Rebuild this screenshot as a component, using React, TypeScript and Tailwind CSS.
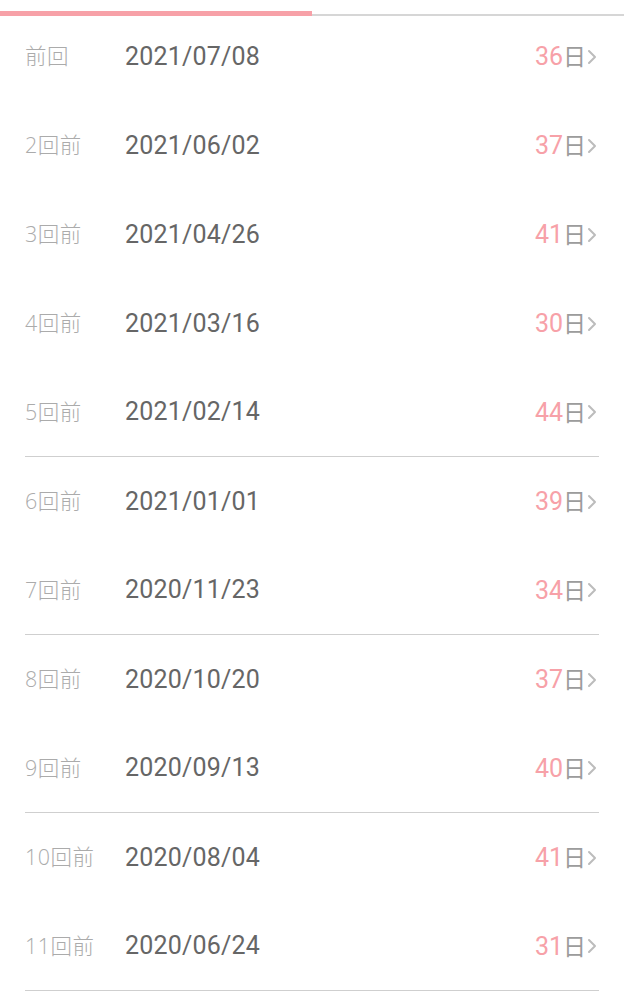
import React from 'react'

const ROWS = [
  { label: '前回', date: '2021/07/08', days: 36, line: false },
  { label: '2回前', date: '2021/06/02', days: 37, line: false },
  { label: '3回前', date: '2021/04/26', days: 41, line: false },
  { label: '4回前', date: '2021/03/16', days: 30, line: false },
  { label: '5回前', date: '2021/02/14', days: 44, line: true },
  { label: '6回前', date: '2021/01/01', days: 39, line: false },
  { label: '7回前', date: '2020/11/23', days: 34, line: true },
  { label: '8回前', date: '2020/10/20', days: 37, line: false },
  { label: '9回前', date: '2020/09/13', days: 40, line: true },
  { label: '10回前', date: '2020/08/04', days: 41, line: false },
  { label: '11回前', date: '2020/06/24', days: 31, line: true },
]

const CJK = { fontFamily: '"Open Sans", "Noto Sans CJK JP", sans-serif' }
const NUM = { fontFamily: 'Roboto, "Noto Sans", sans-serif' }

function Chevron() {
  return (
    <svg width="12" height="20" viewBox="0 0 12 20" fill="none" stroke="#bcbcbc" strokeWidth="2" strokeLinecap="round" strokeLinejoin="round">
      <path d="M3 4l6 6-6 6" />
    </svg>
  )
}

export default function App() {
  return (
    <div className="w-[624px] min-h-[999px] bg-white">
      {/* progress */}
      <div className="h-[16px] flex items-end">
        <div className="h-[5px] w-[312px] bg-[#f7a1a8]" />
        <div className="h-[2px] flex-1 bg-[#d6d6d6]" />
      </div>

      <div className="mt-[-4px] px-[25px]">
        {ROWS.map(r => (
          <div
            key={r.label}
            className={`h-[89px] flex items-center ${r.line ? 'border-b border-[#cfcfcf]' : ''}`}
          >
            <div className="w-[100px] text-[21.5px] font-light text-[#ababab] tracking-[0.5px]" style={CJK}>
              {r.label}
            </div>
            <div className="text-[25px] text-[#666666] tracking-[0.2px]" style={NUM}>
              {r.date}
            </div>
            <div className="ml-auto flex items-center">
              <div className="leading-none whitespace-nowrap">
                <span className="text-[25px] text-[#f7a1a8]" style={NUM}>{r.days}</span>
                <span className="text-[23px] text-[#9c9c9c]" style={CJK}>日</span>
              </div>
              <span className="mr-[1px]"><Chevron /></span>
            </div>
          </div>
        ))}
      </div>
    </div>
  )
}
